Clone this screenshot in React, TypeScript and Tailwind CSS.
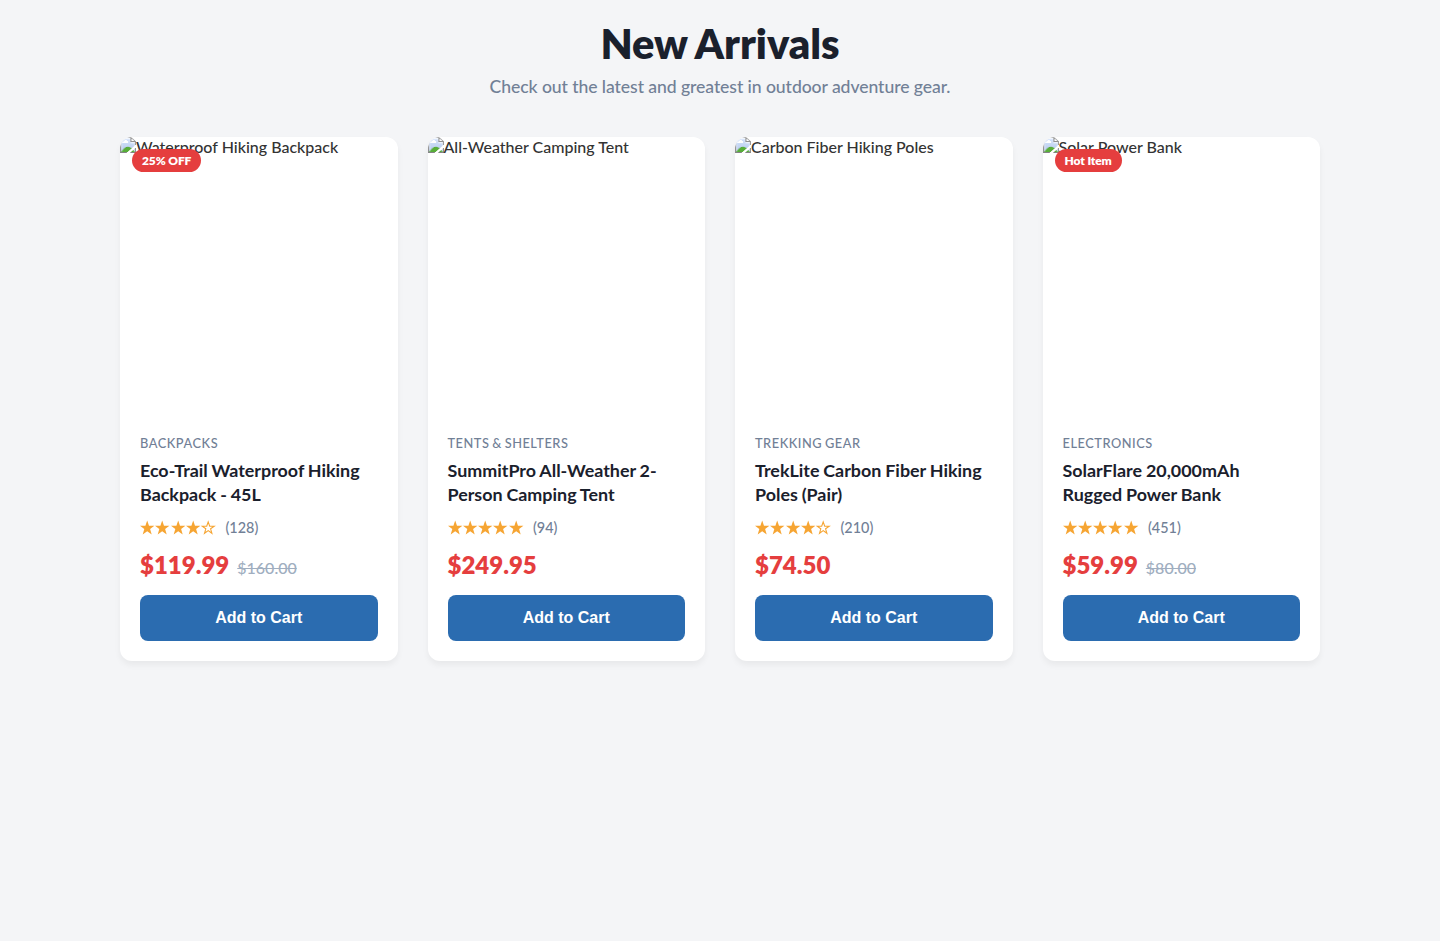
const products = [
  { alt: 'Waterproof Hiking Backpack', badge: '25% OFF', cat: 'Backpacks', title: 'Eco-Trail Waterproof Hiking Backpack - 45L', stars: 4, n: 128, price: '$119.99', old: '$160.00' },
  { alt: 'All-Weather Camping Tent', badge: '', cat: 'Tents & Shelters', title: 'SummitPro All-Weather 2-Person Camping Tent', stars: 5, n: 94, price: '$249.95', old: '' },
  { alt: 'Carbon Fiber Hiking Poles', badge: '', cat: 'Trekking Gear', title: 'TrekLite Carbon Fiber Hiking Poles (Pair)', stars: 4, n: 210, price: '$74.50', old: '' },
  { alt: 'Solar Power Bank', badge: 'Hot Item', cat: 'Electronics', title: 'SolarFlare 20,000mAh Rugged Power Bank', stars: 5, n: 451, price: '$59.99', old: '$80.00' },
];

function Star({ filled }: { filled: boolean }) {
  return (
    <svg viewBox="0 0 15.3 15" className="h-[15px] w-[15.3px]" aria-hidden="true">
      {filled ? (
        <path fill="#f6a533" d="M7.2.5l1.8 5.2h5.4l-4.3 3.3 1.6 5.4-4.5-3.2-4.5 3.2 1.6-5.4L0 5.7h5.4z" />
      ) : (
        <path fill="none" stroke="#f6a533" strokeWidth="1.1" d="M7.2 1.9l1.5 4.3h4.5L9.6 8.8l1.3 4.5-3.7-2.7-3.7 2.7 1.3-4.5L1.2 6.2h4.5z" />
      )}
    </svg>
  );
}

export default function App() {
  return (
    <div className="min-h-screen bg-[#f4f5f7] font-['Lato',sans-serif] text-[#333]">
      <section className="mx-auto w-[1200px] pt-[18px]">
        <header className="mb-[37px] text-center">
          <h1 className="text-[41.6px] font-extrabold leading-[50px] text-[#1a202c] [word-spacing:-1px]">New Arrivals</h1>
          <p className="mt-[5px] text-[17.6px] font-medium leading-[27px] tracking-[-0.08px] text-[#718096]">Check out the latest and greatest in outdoor adventure gear.</p>
        </header>
        <div className="grid grid-cols-4 gap-[30px]">
          {products.map((p) => (
            <article key={p.alt} className="relative overflow-hidden rounded-xl bg-white shadow-[0_4px_6px_rgba(0,0,0,0.05)]">
              <div className="h-[277.5px]">
                <img src="data:," alt={p.alt} className="block h-full w-full object-cover text-base font-medium leading-5" />
              </div>
              {p.badge && <span className="absolute left-3 top-3 rounded-full bg-[#e53e3e] px-[10px] py-1 text-xs font-extrabold leading-[15px] tracking-[-0.12px] text-white">{p.badge}</span>}
              <div className="flex flex-col p-5">
                <div className="text-[12.8px] font-medium uppercase leading-4 tracking-[0.53px] text-[#718096] [word-spacing:-1px]">{p.cat}</div>
                <h2 className="mt-[7px] text-[17.9px] font-bold leading-6 text-[#1a202c] [word-spacing:-0.5px]">{p.title}</h2>
                <div className="mt-[13px] flex h-[18px] items-center">
                  <span className="flex" role="img" aria-label={`${p.stars} out of 5 stars`}>
                    {[1, 2, 3, 4, 5].map((i) => <Star key={i} filled={i <= p.stars} />)}
                  </span>
                  <span className="ml-[9px] text-[14.4px] font-medium text-[#718096]">({p.n})</span>
                </div>
                <div className="mt-[13.5px] flex h-[29px] items-baseline gap-2">
                  <span className="text-2xl font-extrabold leading-[29px] text-[#e53e3e]">{p.price}</span>
                  {p.old && <span className="text-base font-medium leading-5 text-[#a0aec0] line-through">{p.old}</span>}
                </div>
                <button className="mt-[15.5px] h-[46px] rounded-lg bg-[#2b6cb0] font-['Liberation_Sans',sans-serif] text-base font-bold text-white">Add to Cart</button>
              </div>
            </article>
          ))}
        </div>
      </section>
    </div>
  );
}
